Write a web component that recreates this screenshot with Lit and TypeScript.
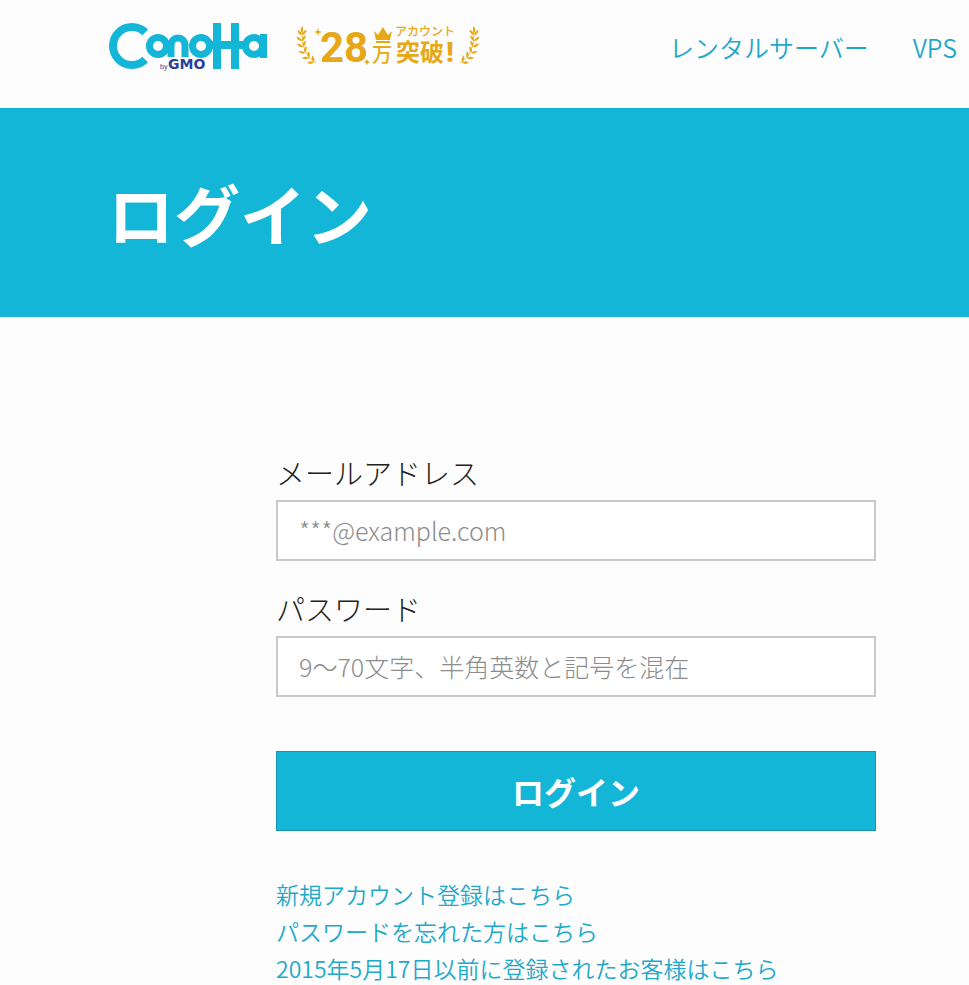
import { LitElement, html, css, svg } from "lit";
import { customElement } from "lit/decorators.js";

/* Nodes along the stem of the laurel branch: x, y and heading in degrees, bottom to top. */
const NODES = [
  [18, 38, -145], [13, 34, -135], [9, 29, -122], [7, 23, -108], [6, 17, -98], [6, 11, -88],
];

const leaf = (x: number, y: number, angle: number) =>
  svg`<path d="M0 0 Q3 -3 7 0 Q3 2 0 0 Z" transform=${`translate(${x} ${y}) rotate(${angle})`}></path>`;

const branch = svg`
  ${NODES.map(([x, y, a]) => [leaf(x, y, a - 42), leaf(x, y, a + 42)])}
  ${leaf(6, 9, -88)}
  <path d="M20 39 Q5 30 6 8" fill="none" stroke="currentColor" stroke-width="0.7"></path>`;

@customElement("conoha-logo")
export class ConohaLogo extends LitElement {
  static styles = css`
    :host { display: block; color: #14b6d8; }
    svg { display: block; width: 160px; height: 52px; }
    .ring { fill: none; stroke: currentColor; }
    .by { font-family: "Liberation Sans", Arial, sans-serif; font-size: 7px; fill: #2a3f9c; }
    .gmo { font-family: "DejaVu Sans", sans-serif; font-size: 14px; font-weight: 700; fill: #2a3f9c; }
  `;
  render() {
    return html`<svg viewBox="0 0 160 52" role="img" aria-label="ConoHa by GMO">
      <circle class="ring" cx="24" cy="25" r="19" stroke-width="8" pathLength="360" stroke-dasharray="268 92" transform="rotate(46 24 25)"></circle>
      <circle class="ring" cx="50" cy="25" r="8.5" stroke-width="7"></circle>
      <circle class="ring" cx="70" cy="24" r="7" stroke-width="7" pathLength="360" stroke-dasharray="180 180" transform="rotate(180 70 24)"></circle>
      <g fill="currentColor">
        <rect x="59.5" y="23" width="7" height="13"></rect>
        <rect x="73.5" y="23" width="7" height="13"></rect>
        <rect x="105" y="2" width="8" height="46"></rect>
        <rect x="123" y="2" width="8" height="46"></rect>
        <rect x="101" y="20" width="36" height="8"></rect>
        <rect x="152" y="13" width="7" height="24"></rect>
      </g>
      <circle class="ring" cx="93" cy="25" r="8.5" stroke-width="7"></circle>
      <circle class="ring" cx="146" cy="25" r="8.5" stroke-width="7"></circle>
      <text class="by" x="52" y="48">by</text>
      <text class="gmo" x="60" y="48">GMO</text>
    </svg>`;
  }
}

@customElement("account-badge")
export class AccountBadge extends LitElement {
  static styles = css`
    :host { display: block; color: #e6a817; }
    svg { display: block; width: 184px; height: 52px; fill: currentColor; }
    text { font-family: "Noto Sans CJK JP", sans-serif; font-weight: 700; }
    .count { font-family: Roboto, sans-serif; font-size: 42px; }
    .small { font-size: 12px; font-weight: 500; }
    .unit { font-size: 20px; font-weight: 500; }
    .big { font-size: 24px; }
    .mark { font-family: Roboto, sans-serif; font-size: 28px; font-weight: 900; }
  `;
  render() {
    return html`<svg viewBox="0 -3 184 52" role="img" aria-label="28万アカウント突破!">
      <g>${branch}</g>
      <g transform="translate(184 0) scale(-1 1)">${branch}</g>
      <path d="M22 4 L23 7 L26 8 L23 9 L22 12 L21 9 L18 8 L21 7 Z"></path>
      <path d="M71 35 L72 37 L74 38 L72 39 L71 41 L70 39 L68 38 L70 37 Z"></path>
      <path d="M78 7 L82 11 L87 3 L92 11 L96 7 L94 16 L80 16 Z M80 17 H94 V19 H80 Z"></path>
      <text class="count" x="24" y="38">28</text>
      <text class="unit" x="76" y="38">万</text>
      <text class="small" x="99" y="12">アカウント</text>
      <text class="big" x="100" y="37">突破</text>
      <text class="mark" x="150" y="38">!</text>
    </svg>`;
  }
}

@customElement("app-root")
export class AppRoot extends LitElement {
  static styles = css`
    :host {
      display: block;
      min-height: 100vh;
      background: #fdfdfd;
      color: #222;
      font-family: "Noto Sans CJK JP", sans-serif;
      font-weight: 300;
      overflow-x: hidden;
    }
    * { box-sizing: border-box; }
    a { color: #1fa9c9; text-decoration: none; }
    .header {
      display: flex;
      align-items: center;
      height: 108px;
      padding: 0 12px 14px 108px;
    }
    .home { display: flex; align-items: center; gap: 28px; }
    .nav { display: flex; gap: 44px; margin-left: auto; font-size: 25px; line-height: 36px; font-weight: 350; white-space: nowrap; }
    .hero { padding: 56px 108px; background: #14b6d8; }
    .title { margin: 0; color: #fff; font-size: 66px; line-height: 97px; font-weight: 700; }
    .form { display: flex; flex-direction: column; padding: 135px 93px 4px 276px; }
    .label { font-size: 29px; line-height: 40px; margin-bottom: 8px; }
    .field {
      width: 100%;
      height: 61px;
      margin: 0 0 27px;
      padding: 0 21px 2px;
      border: 2px solid #c8c8c8;
      border-radius: 0;
      background: #fff;
      color: #222;
      font: inherit;
      font-size: 25px;
    }
    .field::placeholder { color: #8c8c8c; opacity: 1; }
    .submit {
      height: 80px;
      margin: 27px 0 45px;
      border: 1px solid #1593b0;
      background: #14b6d8;
      color: #fff;
      font: inherit;
      font-size: 32px;
      font-weight: 700;
    }
    .links { margin: 0; padding: 0; list-style: none; font-size: 23px; line-height: 37px; font-weight: 350; }
  `;
  render() {
    return html`
      <header class="header">
        <a class="home" href="#"><conoha-logo></conoha-logo><account-badge></account-badge></a>
        <nav class="nav"><a href="#">レンタルサーバー</a><a href="#">VPS</a></nav>
      </header>
      <main>
        <div class="hero"><h1 class="title">ログイン</h1></div>
        <form class="form">
          <label class="label" for="mail">メールアドレス</label>
          <input class="field" id="mail" type="email" placeholder="***@example.com">
          <label class="label" for="password">パスワード</label>
          <input class="field" id="password" type="password" placeholder="9〜70文字、半角英数と記号を混在">
          <button class="submit" type="button">ログイン</button>
          <ul class="links">
            <li><a href="#">新規アカウント登録はこちら</a></li>
            <li><a href="#">パスワードを忘れた方はこちら</a></li>
            <li><a href="#">2015年5月17日以前に登録されたお客様はこちら</a></li>
          </ul>
        </form>
      </main>
    `;
  }
}
